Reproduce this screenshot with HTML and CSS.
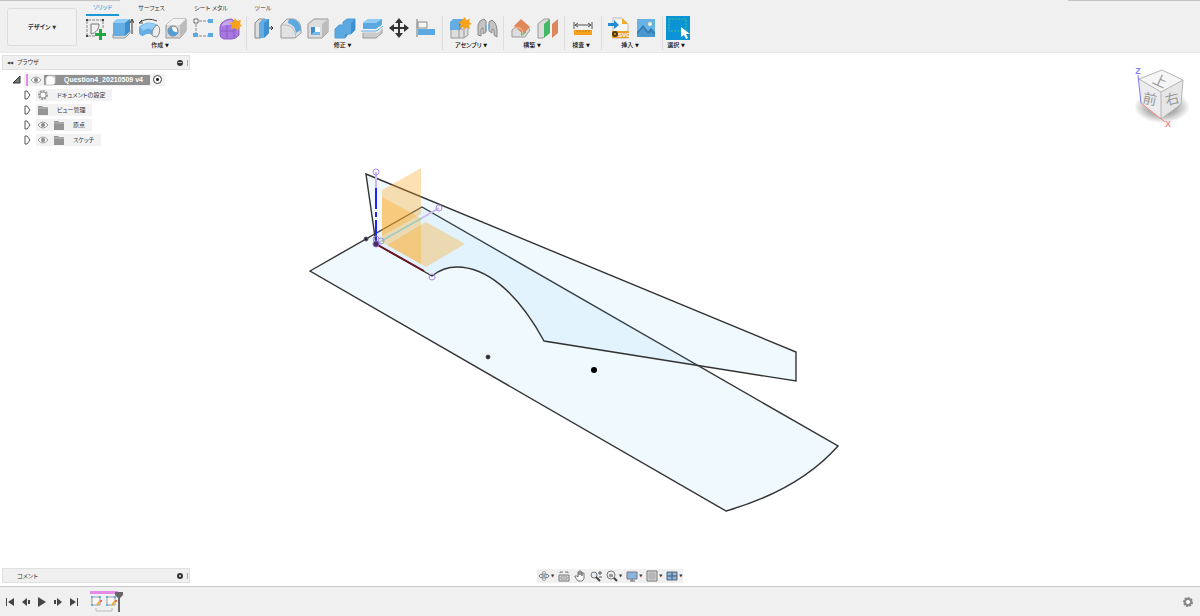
FILE: index.html
```html
<!DOCTYPE html>
<html lang="ja">
  <head>
    <meta charset="UTF-8" />
    <meta name="viewport" content="width=device-width, initial-scale=1.0" />
    <title>Question4_20210509 v4</title>
    <link rel="stylesheet" href="styles.css">
  </head>
  <body>
    <header class="toolbar">
      <button class="workspace" type="button">デザイン <span class="caret">▼</span></button>
      <div class="ribbon">
        <nav class="tabs">
          <button class="tab active" type="button">ソリッド</button>
          <button class="tab" type="button">サーフェス</button>
          <button class="tab wide" type="button">シート メタル</button>
          <button class="tab short" type="button">ツール</button>
        </nav>
        <div class="groups">
          <div class="group">
            <div class="tools">
              <button type="button" aria-label="スケッチを作成">
                <svg viewBox="0 0 24 24">
                  <path d="M5 4h14M4 5v14M5 20h8M20 5v8" fill="none" stroke="#888" stroke-dasharray="3 1" />
                  <path d="M8 18V8h8C16 13 13 17 8 18z" fill="none" stroke="#777" />
                  <path d="M3 3h2v2H3zM19 3h2v2h-2zM3 19h2v2H3z" fill="#444" />
                  <path d="M16 13h3v4h4v3h-4v4h-3v-4h-4v-3h4z" fill="#22a745" />
                </svg>
              </button>
              <button type="button" aria-label="押し出し">
                <svg viewBox="0 0 24 24">
                  <path d="M3 18v4h12l5-5v-3l-5 4z" fill="#ddd" stroke="#999" />
                  <path d="M3 7l4-4h13v12l-5 5H3z" fill="#64ade4" />
                  <path d="M3 7l4-4h13l-5 4z" fill="#91cdf5" />
                  <path d="M15 7l5-4v12l-5 5z" fill="#3d8fcf" />
                  <path d="M22 18V4M20 7l2-4 2 4" fill="none" stroke="#333" />
                </svg>
              </button>
              <button type="button" aria-label="回転">
                <svg viewBox="0 0 24 24">
                  <path d="M2 11q9-8 19-2v11q-3 2-6-1-4-3-9 1-3 0-4-3z" fill="#64ade4" />
                  <path d="M3 11q9-7 16-2l-4 5q-4-3-9 1z" fill="#91cdf5" />
                  <path d="M20 9q4 2 2 9l-2 3q-4 0-5-2 0-7 5-10z" fill="#eee" stroke="#888" />
                  <path d="M3 6Q11 1 20 5M2 7l3-3M2 7h4" fill="none" stroke="#444" />
                </svg>
              </button>
              <button type="button" aria-label="穴">
                <svg viewBox="0 0 24 24">
                  <path d="M2 9l7-6h13v12l-6 7H2z" fill="#d7d7d7" stroke="#999" />
                  <path d="M2 9l7-6h13l-6 6z" fill="#f2f2f2" />
                  <path d="M16 9l6-6v12l-6 7z" fill="#bcbcbc" />
                  <circle cx="9" cy="15" r="5" fill="#f7f7f7" stroke="#777" />
                  <path d="M8 11q0 6 6 5-1 4-5 4-5-1-5-5 1-4 4-4z" fill="#529fd8" />
                </svg>
              </button>
              <button type="button" aria-label="パターン">
                <svg viewBox="0 0 24 24">
                  <path d="M8 5h9M5 8v9M8 20h9" fill="none" stroke="#888" stroke-dasharray="3 1" />
                  <path d="M3 3h4v4H3z" fill="#fff" stroke="#666" />
                  <path d="M17 3h5v4h-5zM17 17h5v4h-5zM2 17h5v4H2z" fill="#5ca9e2" />
                </svg>
              </button>
              <button type="button" aria-label="フォームを作成">
                <svg viewBox="0 0 24 24">
                  <path d="M3 8q4-5 11-5l7 8v8q-3 4-7 4H6q-4-1-4-4V11z" fill="#a678df" stroke="#9263cf" />
                  <path d="M4 8q4-4 10-4l1 5q-3-1-11 1z" fill="#c5a6ef" />
                  <path d="M3 15h13l5-3M9 9v14M16 10v12" fill="none" stroke="#8a58c8" />
                  <path d="M17 2l2 3 4-1-1 4 2 2-3 1-1 4-3-3-4 1 1-4-3-2 4-1z" fill="#f8a21c" />
                </svg>
              </button>
            </div>
            <button class="menu" type="button">作成 <span class="caret">▼</span></button>
          </div>

          <div class="group">
            <div class="tools">
              <button type="button" aria-label="プレス/プル">
                <svg viewBox="0 0 24 24">
                  <path d="M3 7l4-4h6v15l-4 4H3z" fill="#ddd" stroke="#888" />
                  <path d="M7 7l4-4h6v14l-5 5H7z" fill="#64ade4" />
                  <path d="M12 7l5-4v14l-5 5z" fill="#3d8fcf" />
                  <path d="M17 12h4M19 10l2 2-2 2" fill="none" stroke="#333" />
                </svg>
              </button>
              <button type="button" aria-label="フィレット">
                <svg viewBox="0 0 24 24">
                  <path d="M2 9l6-6h5c6 0 9 5 9 11v3l-6 5H2z" fill="#e2e2e2" stroke="#999" />
                  <path d="M10 3h3q8 1 9 11l-5 3Q16 9 9 7z" fill="#5ca9e2" />
                  <path d="M2 9h5q9 1 10 12" fill="none" stroke="#bbb" />
                </svg>
              </button>
              <button type="button" aria-label="シェル">
                <svg viewBox="0 0 24 24">
                  <path d="M2 8l6-5h14v13l-6 6H2z" fill="#ddd" stroke="#999" />
                  <path d="M16 8l6-5v13l-6 6z" fill="#bcbcbc" />
                  <path d="M5 11h9v8H5z" fill="#fff" />
                  <path d="M5 11h4v5l-4 3z" fill="#3d8fcf" />
                  <path d="M5 19l4-3h5v3z" fill="#70b8ea" />
                </svg>
              </button>
              <button type="button" aria-label="結合">
                <svg viewBox="0 0 24 24">
                  <path d="M2 13l4-4h4V6l4-3h8v11l-4 4h-3l-3 4H2z" fill="#5ca9e2" stroke="#4f9fda" />
                  <path d="M18 7l4-4v11l-4 4zM12 18h3l-3 4z" fill="#3d8fcf" />
                </svg>
              </button>
              <button type="button" aria-label="分割">
                <svg viewBox="0 0 24 24">
                  <path d="M3 16h13l6-5v6l-6 5H3z" fill="#ccc" stroke="#999" />
                  <path d="M3 7l5-4h14v6l-6 4H3z" fill="#5ca9e2" />
                  <path d="M3 7l5-4h14l-6 4z" fill="#91cdf5" />
                  <path d="M1 15h16l6-5" fill="none" stroke="#fff" stroke-width="3" />
                  <path d="M1 15h16l6-5" fill="none" stroke="#4f9fd9" />
                </svg>
              </button>
              <button type="button" aria-label="移動/コピー">
                <svg viewBox="0 0 24 24">
                  <path d="M12 4v16M4 12h16" stroke="#333" stroke-width="2" />
                  <path d="M12 2l4 5H8zM12 22l-4-5h8zM2 12l5-4v8zM22 12l-5 4V8z" fill="#333" />
                </svg>
              </button>
              <button type="button" aria-label="位置合わせ">
                <svg viewBox="0 0 24 24">
                  <path d="M3 3v18" stroke="#777" />
                  <path d="M4 6h9v6H4z" fill="#f5f5f5" stroke="#888" />
                  <path d="M4 13h17v6H4z" fill="#5ca9e2" />
                </svg>
              </button>
            </div>
            <button class="menu" type="button">修正 <span class="caret">▼</span></button>
          </div>

          <div class="group">
            <div class="tools">
              <button type="button" aria-label="新規コンポーネント">
                <svg viewBox="0 0 24 24">
                  <path d="M3 13h13l4-3v9l-4 3H3z" fill="#ddd" stroke="#999" />
                  <path d="M11 14v8M16 14v8M12 13l3-3h5" fill="none" stroke="#999" />
                  <path d="M2 6l3-3h10v7l-4 4H2z" fill="#64ade4" />
                  <path d="M11 6l4-3v7l-4 4z" fill="#3d8fcf" />
                  <path d="M17 1l1 3 4-1-1 3 3 2-3 1 1 4-4-2-2 3-1-3-4 1 2-4-3-1 3-2z" fill="#f8a21c" />
                </svg>
              </button>
              <button type="button" aria-label="ジョイント">
                <svg viewBox="0 0 24 24">
                  <path d="M3 9q1-5 6-6l2 2v11l-3 2v-6l-2 1v7l-3-1zM14 6l3-2 3 3q2 3 2 7v7l-3-2v-5l-2-1v4l-3-2z" fill="#c4c4c4" stroke="#888" />
                  <path d="M11 9v6M14 8v5" fill="none" stroke="#5ca9e2" />
                </svg>
              </button>
            </div>
            <button class="menu" type="button">アセンブリ <span class="caret">▼</span></button>
          </div>

          <div class="group">
            <div class="tools">
              <button type="button" aria-label="オフセット平面">
                <svg viewBox="0 0 24 24">
                  <path d="M3 14l6-5h8l4 5-5 7H3z" fill="#ddd" stroke="#999" />
                  <path d="M12 20v-6l5-2v5z" fill="#62bf79" />
                  <path d="M5 10l7-7 9 8-7 7z" fill="#df8858" />
                  <path d="M4 12h7q3 1 3 6" fill="none" stroke="#f0c4ab" />
                </svg>
              </button>
              <button type="button" aria-label="中立面">
                <svg viewBox="0 0 24 24">
                  <path d="M2 8l6-5h5v13l-6 6H2z" fill="#ddd" stroke="#999" />
                  <path d="M8 8l6-5v14l-6 5z" fill="#43b865" />
                  <path d="M16 8l6-5v14l-6 5z" fill="#df875c" />
                </svg>
              </button>
            </div>
            <button class="menu" type="button">構築 <span class="caret">▼</span></button>
          </div>

          <div class="group single">
            <div class="tools">
              <button type="button" aria-label="計測">
                <svg viewBox="0 0 24 24">
                  <path d="M3 6v7M21 6v7M4 9h16M7 7L4 9l3 2M17 7l3 2-3 2" fill="none" stroke="#555" />
                  <path d="M3 14h18v5H3z" fill="#f7a11b" />
                  <path d="M6 14v2M9 14v2M12 14v2M15 14v2M18 14v2" stroke="#c47f1c" />
                </svg>
              </button>
            </div>
            <button class="menu" type="button">検査 <span class="caret">▼</span></button>
          </div>

          <div class="group">
            <div class="tools">
              <button type="button" aria-label="SVGを挿入">
                <svg viewBox="0 0 24 24">
                  <path d="M6 2h9l6 6v14H6z" fill="#f7f7f7" stroke="#bbb" />
                  <path d="M15 2l6 6h-6z" fill="#f5ad2b" />
                  <path d="M1 7h6V4l5 5-5 4v-3H1z" fill="#238bd2" />
                  <path d="M5 15h17v7H5z" fill="#efa126" />
                  <circle cx="8" cy="18" r="2" fill="none" stroke="#4d3810" stroke-width="2" />
                  <text x="11" y="21" class="badge">SVG</text>
                </svg>
              </button>
              <button type="button" aria-label="画像を挿入">
                <svg viewBox="0 0 24 24">
                  <path d="M3 3h18v18H3z" fill="#67b3e6" />
                  <path d="M3 16l6-7 5 6 3-3 4 4v5H3z" fill="#347eb4" />
                  <path d="M3 18l6-6 5 6 3-2 4 3v2H3z" fill="#4b98cf" />
                  <circle cx="16" cy="8" r="2" fill="#f5f3bd" />
                </svg>
              </button>
            </div>
            <button class="menu" type="button">挿入 <span class="caret">▼</span></button>
          </div>

          <div class="group last">
            <div class="tools">
              <button class="selected" type="button" aria-label="選択">
                <svg viewBox="0 0 24 24">
                  <path d="M3 3h17v12H3z" fill="none" stroke="#43bd91" stroke-dasharray="2 1" />
                  <path d="M15 11v10l3-2 2 4 2-1-2-4h4z" fill="#fff" />
                </svg>
              </button>
            </div>
            <button class="menu" type="button">選択 <span class="caret">▼</span></button>
          </div>
        </div>
      </div>
    </header>

    <main class="viewport">
      <svg class="model" viewBox="0 53 1200 533">
        <!-- sketch profiles -->
        <g class="profile">
          <path d="M310 271L422 207L838 446Q799 490 726 511z" />
          <path d="M366 174L796 352V381L544 341C516 290 485 267 457 267Q443 267 432 276L376 244z" />
        </g>
        <!-- origin planes -->
        <g class="plane">
          <path d="M382 190l39-22v46l-39 22z" />
          <path d="M382 197l39 21v46l-39-22z" />
          <path d="M426 222l39 22-39 23-39-22z" />
        </g>
        <!-- axes -->
        <g fill="none">
          <path d="M376 172v18M422 218l17-10" stroke="#cdb8f0" stroke-width="2" />
          <path d="M376 244l46-26" stroke="#a3cdbf" stroke-width="2" />
          <path d="M376 188v21M376 212v5M376 220v24" stroke="#2222ff" stroke-width="2" />
          <path d="M376 244l48 27" stroke="#6d1722" stroke-width="2" />
        </g>
        <g fill="none" stroke="#ad8bea">
          <circle cx="376" cy="172" r="3" />
          <circle cx="439" cy="208" r="3" />
          <circle cx="432" cy="277" r="3" />
          <circle cx="381" cy="241" r="3" />
          <circle cx="376" cy="239" r="3" />
        </g>
        <circle cx="376" cy="244" r="3" fill="#463061" stroke="#9368d4" />
        <circle cx="366" cy="239" r="2" fill="#222" stroke="#675b78" />
        <circle cx="488" cy="357" r="2" fill="#222" stroke="#555" />
        <circle cx="594" cy="370" r="3" />
      </svg>

      <aside class="browser">
        <div class="panel-title">
          <span><span class="rewind">◀◀</span>ブラウザ</span>
          <span class="panel-end"><button class="minus" type="button" aria-label="最小化"></button></span>
        </div>
        <ul class="tree">
          <li class="root">
            <svg class="arrow" viewBox="0 0 10 10"><path d="M8 1v7H1z" fill="#777" stroke="#333" /></svg>
            <div class="row">
              <i class="mark"></i>
              <svg class="icon" viewBox="0 0 12 12"><path d="M1 6q5-6 10 0-5 6-10 0z" fill="#fff" stroke="#999" /><circle cx="6" cy="6" r="2" fill="#888" /></svg>
              <span class="doc">
                <svg class="icon" viewBox="0 0 12 12"><path d="M2 4l2-2h7v7l-2 2H2z" fill="#fff" stroke="#ccc" /><path d="M9 4l2-2" fill="none" stroke="#bbb" /></svg>
                <span>Question4_20210509 v4</span>
              </span>
              <input type="radio" class="activate" aria-label="アクティブ" checked />
            </div>
          </li>
          <li>
            <svg class="arrow" viewBox="0 0 10 10"><path d="M3 1h2l3 4-3 4H3z" fill="#fff" stroke="#555" /></svg>
            <div class="row">
              <svg class="icon" viewBox="0 0 12 12"><circle cx="6" cy="6" r="4" fill="none" stroke="#999" stroke-width="2" stroke-dasharray="2 1" /><circle cx="6" cy="6" r="3" fill="#fff" stroke="#999" /></svg>
              <span>ドキュメントの設定</span>
            </div>
          </li>
          <li>
            <svg class="arrow" viewBox="0 0 10 10"><path d="M3 1h2l3 4-3 4H3z" fill="#fff" stroke="#555" /></svg>
            <div class="row">
              <svg class="icon" viewBox="0 0 12 12"><path d="M1 2h4l1 1h5v8H1z" fill="#949494" /><path d="M1 4h10" stroke="#bbb" /></svg>
              <span>ビュー管理</span>
            </div>
          </li>
          <li>
            <svg class="arrow" viewBox="0 0 10 10"><path d="M3 1h2l3 4-3 4H3z" fill="#fff" stroke="#555" /></svg>
            <div class="row">
              <svg class="icon" viewBox="0 0 12 12"><path d="M1 6q5-6 10 0-5 6-10 0z" fill="#fff" stroke="#999" /><circle cx="6" cy="6" r="2" fill="#888" /></svg>
              <svg class="icon" viewBox="0 0 12 12"><path d="M1 2h4l1 1h5v8H1z" fill="#949494" /><path d="M1 4h10" stroke="#bbb" /></svg>
              <span>原点</span>
            </div>
          </li>
          <li>
            <svg class="arrow" viewBox="0 0 10 10"><path d="M3 1h2l3 4-3 4H3z" fill="#fff" stroke="#555" /></svg>
            <div class="row">
              <svg class="icon" viewBox="0 0 12 12"><path d="M1 6q5-6 10 0-5 6-10 0z" fill="#fff" stroke="#999" /><circle cx="6" cy="6" r="2" fill="#888" /></svg>
              <svg class="icon" viewBox="0 0 12 12"><path d="M1 2h4l1 1h5v8H1z" fill="#949494" /><path d="M1 4h10" stroke="#bbb" /></svg>
              <span>スケッチ</span>
            </div>
          </li>
        </ul>
      </aside>

      <svg class="viewcube" viewBox="0 0 72 72">
        <defs>
          <radialGradient id="shadow">
            <stop offset="50%" stop-color="#aaa" />
            <stop offset="100%" stop-color="#aaa" stop-opacity="0" />
          </radialGradient>
        </defs>
        <ellipse cx="40" cy="46" rx="28" ry="16" fill="url(#shadow)" />
        <path d="M17 18l23-9 21 10-2 24-20 15-20-15z" fill="#ececee" />
        <path d="M17 18l23-9 21 10-22 12z" fill="#f5f5f5" />
        <path d="M39 31l22-12-2 24-20 15z" fill="#e6e6e7" />
        <path d="M17 18l23-9 21 10-2 24-20 15M17 18l22 13 22-12M39 31v27" fill="none" stroke="#b5b5b5" />
        <path d="M16 14l3 28" stroke="#7777f5" />
        <path d="M19 42l24 19" stroke="#f08080" />
        <text x="16" y="13" class="axis-z">Z</text>
        <text x="43" y="66" class="axis-x">X</text>
        <text x="38" y="25" class="face" transform="rotate(25 38 20)">上</text>
        <text x="28" y="43" class="face" transform="rotate(12 28 38)">前</text>
        <text x="50" y="43" class="face" transform="rotate(-14 50 38)">右</text>
      </svg>

      <div class="navbar">
        <button type="button" aria-label="オービット">
          <svg viewBox="0 0 12 12"><ellipse cx="6" cy="6" rx="5" ry="2" fill="none" stroke="#777" /><ellipse cx="6" cy="6" rx="2" ry="5" fill="none" stroke="#999" /><circle cx="6" cy="6" r="1" fill="#4a9ae0" /></svg>
          <span class="caret">▼</span>
        </button>
        <button type="button" aria-label="ビュー正面">
          <svg viewBox="0 0 12 12"><path d="M1 5h10v6H1zM2 3V2h3M7 2h3v1" fill="#ddd" stroke="#777" /><path d="M3 7h6v2H3z" fill="#fff" stroke="#888" /></svg>
        </button>
        <button type="button" aria-label="画面移動">
          <svg viewBox="0 0 12 12"><path d="M4 11L1 7V6h2l1 1V2h1v3V1h2v4-3h1v4-3h2v6l-2 2z" fill="#fff" stroke="#777" /></svg>
        </button>
        <button type="button" aria-label="ズーム">
          <svg viewBox="0 0 12 12"><circle cx="4" cy="5" r="3" fill="#e5edf4" stroke="#777" /><path d="M6 7l4 4" stroke="#444" stroke-width="2" /><path d="M10 1v4M8 3h4M9 7h3" stroke="#555" /></svg>
        </button>
        <button type="button" aria-label="フィット">
          <svg viewBox="0 0 12 12"><circle cx="5" cy="5" r="4" fill="#eee" stroke="#777" /><path d="M3 4h4v3H3z" fill="#999" /><path d="M8 8l3 3" stroke="#444" stroke-width="2" /></svg>
          <span class="caret">▼</span>
        </button>
        <button type="button" aria-label="表示設定">
          <svg viewBox="0 0 12 12"><path d="M1 2h10v7H1z" fill="#8bb5df" stroke="#778" /><path d="M4 11h5M6 9v2" stroke="#666" /></svg>
          <span class="caret">▼</span>
        </button>
        <button type="button" aria-label="グリッドとスナップ">
          <svg viewBox="0 0 12 12"><path d="M1 1h10v10H1z" fill="#ddd" stroke="#777" /><path d="M4 1v10M6 1v10M8 1v10M1 4h10M1 6h10M1 8h10" stroke="#aaa" /></svg>
          <span class="caret">▼</span>
        </button>
        <button type="button" aria-label="ビューポート">
          <svg viewBox="0 0 12 12"><path d="M1 2h10v8H1z" fill="#8bb5df" stroke="#567" /><path d="M6 2v8M1 6h10" stroke="#456" /></svg>
          <span class="caret">▼</span>
        </button>
      </div>

      <div class="panel-title comments">
        <span class="comment-label">コメント</span>
        <span class="panel-end"><button class="minus plus" type="button" aria-label="追加"></button></span>
      </div>
    </main>

    <footer class="timeline">
      <div class="playback">
        <button type="button" aria-label="先頭"><svg viewBox="0 0 10 10"><path d="M1 1h1v8H1zM9 1v8L3 5z" /></svg></button>
        <button type="button" aria-label="前へ"><svg viewBox="0 0 10 10"><path d="M6 1v8L1 5zM7 3h2v4H7z" /></svg></button>
        <button type="button" aria-label="再生"><svg viewBox="0 0 10 10"><path d="M1 0l8 5-8 5z" /></svg></button>
        <button type="button" aria-label="次へ"><svg viewBox="0 0 10 10"><path d="M4 1v8l5-4zM1 3h2v4H1z" /></svg></button>
        <button type="button" aria-label="末尾"><svg viewBox="0 0 10 10"><path d="M8 1h1v8H8zM1 1v8l6-4z" /></svg></button>
      </div>
      <svg class="history" viewBox="0 0 34 24">
        <path d="M0 1h28v3H0z" fill="#e48be6" />
        <path d="M2 7h8v8H2zM17 7h8v8h-8z" fill="#f8f8f8" stroke="#999" />
        <path d="M1 6h2v2H1zM9 6h2v2H9zM1 14h2v2H1zM16 6h2v2h-2zM24 6h2v2h-2zM16 14h2v2h-2z" fill="#5eaee0" />
        <path d="M7 15l3-4M22 15l3-4" stroke="#f3ad36" stroke-width="2" />
        <path d="M10 10h2v2h-2zM25 10h2v2h-2z" fill="#e66" />
        <path d="M6 18v3h16v-3" fill="none" stroke="#bbb" />
        <path d="M25 2h8v3l-3 3v14h-2V8l-3-3z" fill="#666" />
      </svg>
      <button class="gear" type="button" aria-label="設定">
        <svg viewBox="0 0 12 12"><circle cx="6" cy="6" r="4" fill="none" stroke="#888" stroke-width="2" stroke-dasharray="2 1" /><circle cx="6" cy="6" r="3" fill="#fff" stroke="#888" stroke-width="2" /></svg>
      </button>
    </footer>
  </body>
</html>
```
FILE: styles.css
```css
* {
  box-sizing: border-box;
}
body {
  margin: 0;
  min-height: 100vh;
  display: flex;
  flex-direction: column;
  background-color: #fff;
  color: #333;
  font-family: "Liberation Sans", "Noto Sans CJK JP", sans-serif;
  font-size: 6px;
  font-feature-settings: "palt";
  line-height: 10px;
}
button {
  padding: 0;
  border: none;
  background: none;
  color: inherit;
  font: inherit;
  font-feature-settings: inherit;
  cursor: pointer;
}
svg {
  display: block;
}
.caret {
  font-family: "DejaVu Sans", sans-serif;
  font-size: 5px;
}

/* toolbar */
.toolbar {
  display: flex;
  height: 53px;
  background-color: #f0f0f0;
  border-bottom: 1px solid #e8e8e8;
}
.toolbar::before,
.toolbar::after {
  content: "";
  position: absolute;
  top: 0;
  left: 0;
  width: 120px;
  height: 1px;
  background-color: #c4c4c4;
}
.toolbar::after {
  left: auto;
  right: 0;
  width: 132px;
}
.workspace {
  width: 70px;
  height: 38px;
  margin: 8px 4px 0 7px;
  border: 1px solid #dcdcdc;
  border-radius: 3px;
  background-color: #f2f2f2;
  font-weight: bold;
}
.tabs {
  display: flex;
  height: 16px;
  padding-left: 5px;
}
.tab {
  width: 33px;
  margin-right: 16px;
  padding-bottom: 1px;
  white-space: nowrap;
}
.tab.wide {
  width: 54px;
}
.tab.short {
  width: 18px;
}
.tab.active {
  color: #0696d7;
  border-bottom: 2px solid #1a97d4;
  padding-bottom: 0;
}
.groups {
  display: flex;
}
.group {
  display: flex;
  flex-direction: column;
  align-items: center;
  height: 34px;
  padding: 0 3px;
  border-right: 1px solid #dedede;
}
.group:first-child {
  padding-left: 0;
}
.group.single {
  width: 37px;
}
.group.last {
  border: none;
}
.tools {
  display: flex;
}
.tools button {
  display: flex;
  justify-content: center;
  width: 27px;
  height: 24px;
}
.tools svg {
  width: 24px;
  height: 24px;
}
.tools .selected {
  width: 24px;
  background-color: #0a93d6;
}
.menu {
  height: 10px;
  padding-right: 4px;
  color: #111;
  font-weight: 500;
  white-space: nowrap;
}
.badge {
  font-size: 6px;
  font-weight: bold;
  fill: #fff;
}

/* modelling area */
.viewport {
  position: relative;
  flex: 1;
  display: flex;
  flex-direction: column;
  justify-content: space-between;
  align-items: flex-start;
  padding: 2px 2px 3px;
}
.model {
  position: absolute;
  top: 0;
  left: 0;
  width: 100%;
  height: 100%;
}
.profile path {
  fill: #69c3fa;
  fill-opacity: 0.1;
  stroke: #333;
  stroke-width: 1.4;
}
.plane path {
  fill: #fba81e;
  fill-opacity: 0.34;
}
.browser,
.comments {
  position: relative;
  width: 188px;
}
.panel-title {
  display: flex;
  justify-content: space-between;
  align-items: center;
  height: 15px;
  padding: 0 1px 0 4px;
  border: 1px solid #e0e0e0;
  background-color: #f0f0f0;
}
.rewind {
  margin-right: 4px;
  font-family: "DejaVu Sans", sans-serif;
  font-size: 4px;
}
.comment-label {
  padding-left: 10px;
}
.panel-end {
  display: flex;
  align-items: center;
  padding-right: 2px;
  border-right: 1px solid #aaa;
}
.minus {
  display: flex;
  align-items: center;
  justify-content: center;
  width: 6px;
  height: 6px;
  margin-right: 2px;
  border-radius: 50%;
  background-color: #333;
}
.minus::before {
  content: "";
  width: 4px;
  height: 1px;
  background-color: #bbb;
}
.minus.plus::before {
  width: 2px;
  height: 2px;
}

/* browser tree */
.tree {
  margin: 0;
  padding: 2px 0 0 20px;
  list-style: none;
}
.tree li {
  display: flex;
  align-items: center;
  height: 15px;
}
.tree .root {
  margin-left: -10px;
}
.arrow {
  width: 10px;
  height: 10px;
  margin-right: 4px;
}
.root .arrow {
  margin-right: 2px;
}
.row {
  display: flex;
  align-items: center;
  gap: 4px;
  height: 12px;
  padding: 0 7px 0 1px;
  background-color: #f2f2f2;
}
.root .row {
  gap: 2px;
  padding: 0 3px 0 2px;
}
.row > span:last-child {
  padding-left: 4px;
}
.icon {
  width: 12px;
  height: 12px;
}
.mark {
  width: 2px;
  height: 12px;
  background-color: #e48be6;
}
.doc {
  display: flex;
  align-items: center;
  gap: 8px;
  height: 10px;
  padding-right: 7px;
  background-color: #919191;
  color: #fff;
  font-size: 7px;
  font-weight: bold;
}
.activate {
  appearance: none;
  width: 9px;
  height: 9px;
  margin: 0 0 0 1px;
  border: 1px solid #444;
  border-radius: 50%;
  background: radial-gradient(circle, #222 1px, #fff 2px);
}

/* view cube */
.viewcube {
  position: absolute;
  top: 8px;
  right: 6px;
  width: 72px;
  height: 72px;
}
.viewcube text {
  font-size: 9px;
  font-weight: bold;
}
.viewcube .axis-z {
  fill: #8080f5;
  text-anchor: middle;
}
.viewcube .axis-x {
  fill: #f48b8b;
}
.viewcube .face {
  font-size: 14px;
  font-weight: normal;
  fill: #999;
  text-anchor: middle;
}

/* navigation bar */
.navbar {
  position: absolute;
  bottom: 3px;
  left: 50%;
  display: flex;
  align-items: center;
  gap: 4px;
  height: 14px;
  margin-left: -63px;
  padding: 0 1px;
  background-color: #f0f0f0;
}
.navbar button {
  display: flex;
  align-items: center;
  gap: 1px;
}
.navbar .caret {
  font-size: 4px;
}
.navbar svg {
  width: 12px;
  height: 12px;
}

/* timeline */
.timeline {
  display: flex;
  align-items: center;
  height: 30px;
  padding: 0 6px 0 5px;
  border-top: 1px solid #c8c8c8;
  background-color: #f0f0f0;
}
.playback {
  display: flex;
  gap: 6px;
}
.playback svg {
  width: 10px;
  height: 10px;
  fill: #444;
}
.history {
  width: 34px;
  height: 24px;
  margin-left: 11px;
}
.gear {
  margin-left: auto;
}
.gear svg {
  width: 12px;
  height: 12px;
}
```
